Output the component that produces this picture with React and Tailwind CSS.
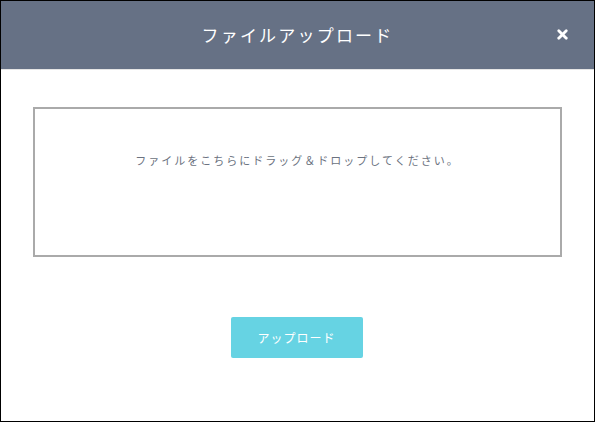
import { X } from "lucide-react";

const App = () => {
    return (
        <div
            className="w-[595px] h-[422px] border border-black bg-white flex flex-col"
            style={{ fontFamily: '"Noto Sans CJK JP", "Noto Sans", sans-serif' }}
        >
            {/* ヘッダー */}
            <div className="relative h-[69px] bg-[#667185] border-b border-[#e5e5e5] flex items-center justify-center shrink-0">
                <h1 className="text-white text-[17px] tracking-[2.2px] font-normal">ファイルアップロード</h1>
                <button className="absolute right-[24px] top-[26px] text-white">
                    <X size={15} strokeWidth={4.5} />
                </button>
            </div>

            <div className="flex-1 flex flex-col px-[32px] pt-[37px]">
                <div className="h-[150px] border-2 border-[#aaaaaa] flex justify-center pt-[46px]">
                    <p className="text-[11px] text-[#6b7280] tracking-[2px] leading-none">
                        ファイルをこちらにドラッグ＆ドロップしてください。
                    </p>
                </div>

                <div className="flex justify-center mt-[60px]">
                    <button className="w-[132px] h-[41px] bg-[#66d3e3] rounded-[2px] text-white text-[12px] tracking-[1px] -translate-x-[1px]">
                        アップロード
                    </button>
                </div>
            </div>
        </div>
    );
};

export default App;
